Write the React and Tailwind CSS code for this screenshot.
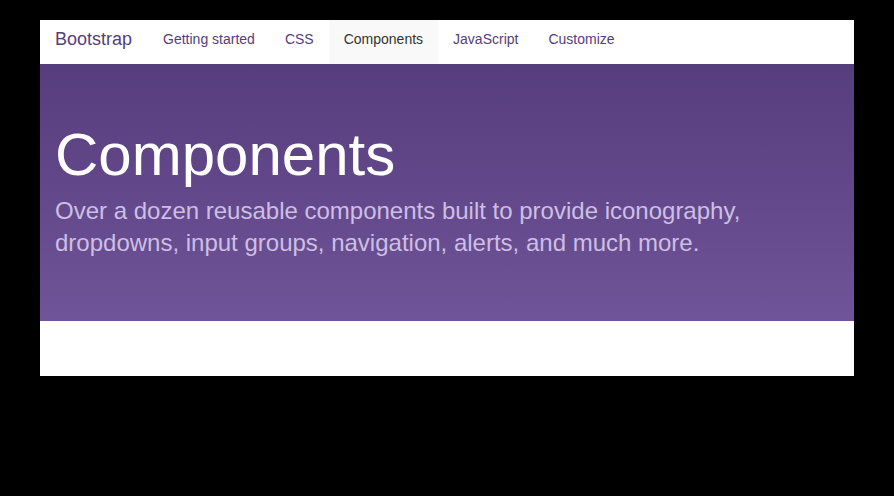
export default function App() {
  const font = { fontFamily: '"Liberation Sans", Arial, sans-serif' };
  return (
    <div className="w-[894px] h-[496px] bg-black pt-[20px] px-[40px]" style={font}>
      <div className="w-[814px] bg-white">
        <nav className="h-[44px] flex items-stretch px-[15px]">
          <div className="flex items-center pb-[5px] text-[18px] text-[#563d7c] pr-[16px]">Bootstrap</div>
          <a className="flex items-center pb-[5px] px-[15px] text-[14px] text-[#563d7c]">Getting started</a>
          <a className="flex items-center pb-[5px] px-[15px] text-[14px] text-[#563d7c]">CSS</a>
          <a className="flex items-center pb-[5px] px-[15px] text-[14px] text-[#333] bg-[#f9f9f9]">Components</a>
          <a className="flex items-center pb-[5px] px-[15px] text-[14px] text-[#563d7c]">JavaScript</a>
          <a className="flex items-center pb-[5px] px-[15px] text-[14px] text-[#563d7c]">Customize</a>
        </nav>
        <div className="h-[257px] bg-gradient-to-b from-[#563d7c] to-[#6f5499] px-[15px] pt-[61px]">
          <h1 className="text-[60px] leading-none text-white">Components</h1>
          <p className="mt-[10px] text-[24px] leading-[1.35] text-[#cdbfe3] w-[700px]">
            Over a dozen reusable components built to provide iconography, dropdowns, input groups, navigation, alerts, and much more.
          </p>
        </div>
        <div className="h-[55px] bg-white"></div>
      </div>
    </div>
  );
}
